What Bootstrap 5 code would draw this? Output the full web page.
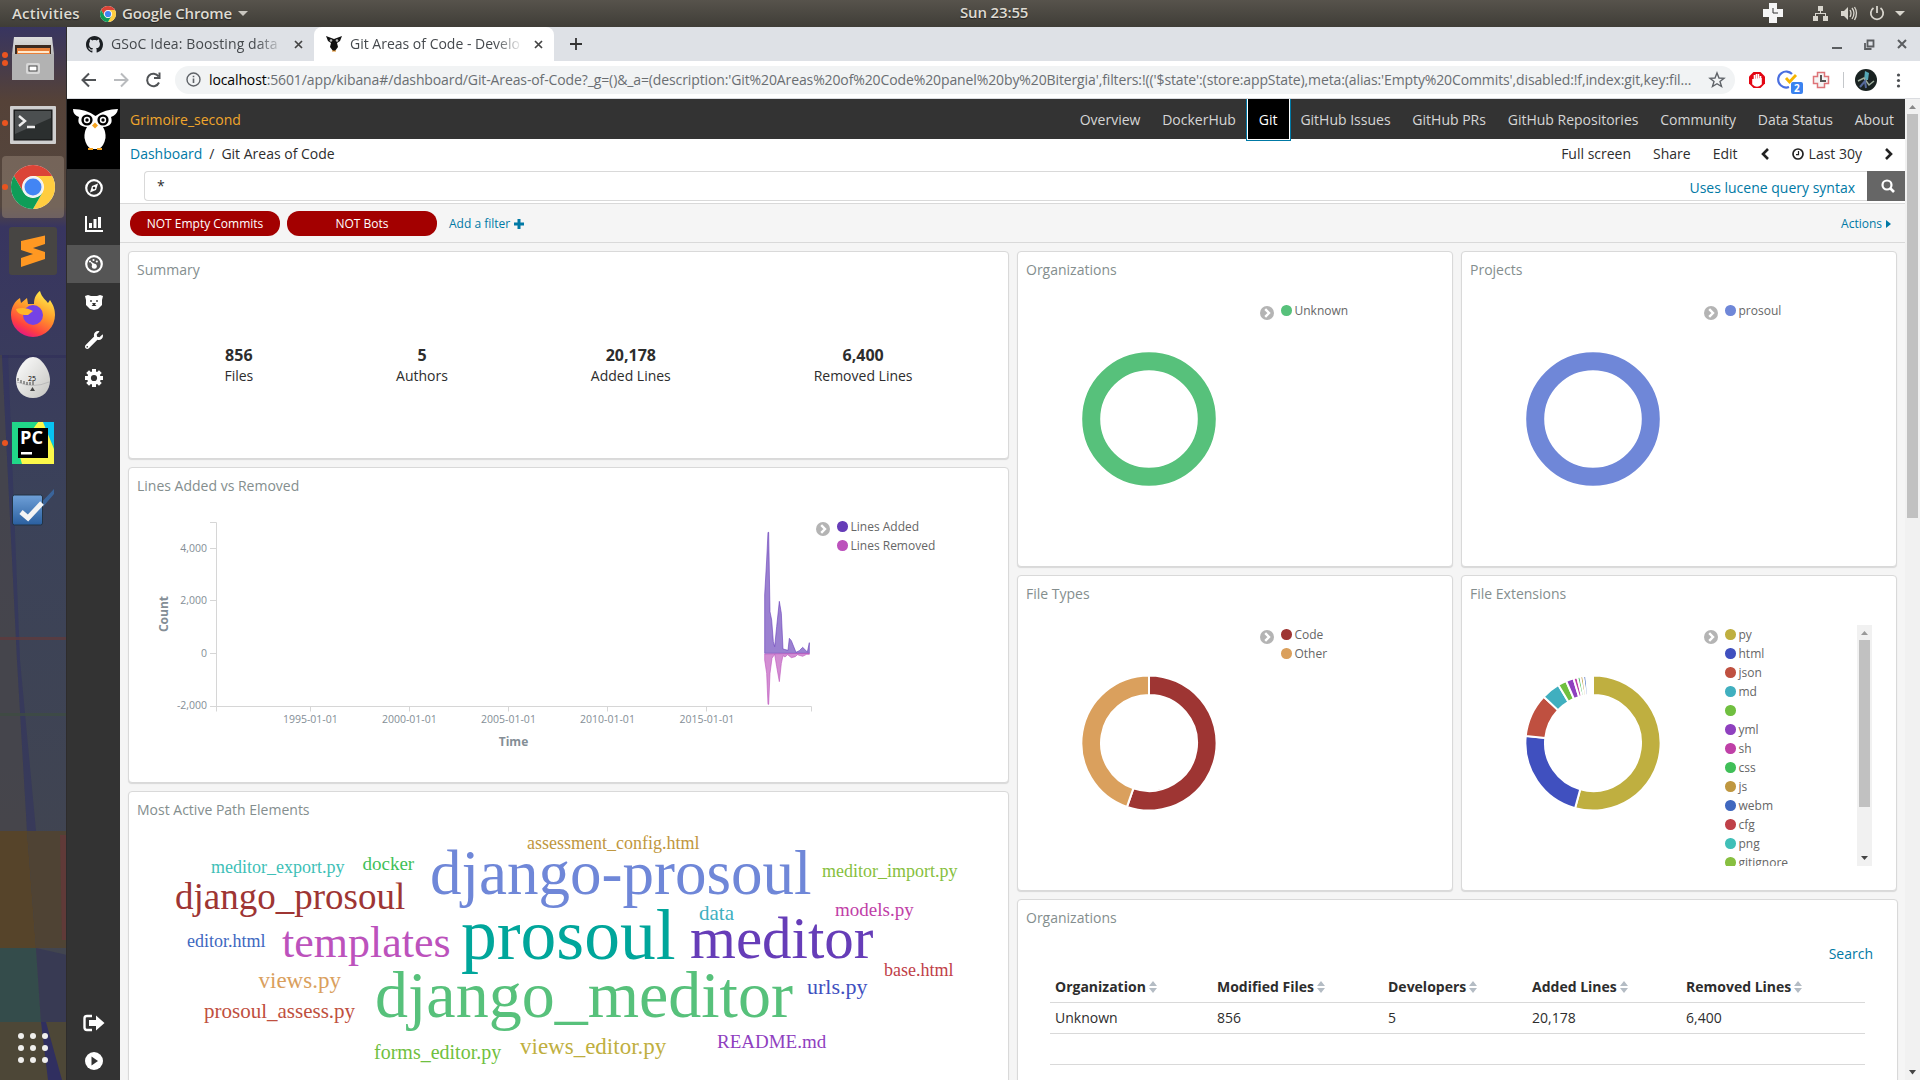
<!DOCTYPE html>
<html lang="en">
<head>
<meta charset="utf-8">
<title>Git Areas of Code</title>
<link href="https://cdn.jsdelivr.net/npm/bootstrap@5.3.0/dist/css/bootstrap.min.css" rel="stylesheet">
<script src="https://cdn.jsdelivr.net/npm/bootstrap@5.3.0/dist/js/bootstrap.bundle.min.js"></script>
<style>
body{font-family:"Open Sans","Noto Sans",sans-serif;font-size:14px;line-height:1.4;color:#2d2d2d;width:1920px;height:1080px;overflow:hidden;background:#f5f5f5}
a{color:#0079a5;text-decoration:none}
svg{display:block;flex:none}
svg text{font-family:"Open Sans","Noto Sans",sans-serif}
.topbar{height:27px;background:linear-gradient(#57534c,#3f3d37);color:#dfdbd2;font-weight:600;font-size:15px;text-shadow:0 1px 1px #222}
.topbar .clock-text{left:960px;top:2px;letter-spacing:-.15px}
.topbar .act{width:69px;letter-spacing:.2px}
.topbar .app{letter-spacing:-.15px}
.dock{width:67px;height:1053px;flex:none;border-right:1px solid #2e2c2c}
.dock .wall{left:0;top:0}
.browser{width:1853px;flex:none}
.tabstrip{height:34px;background:#dee1e6;color:#45494d}
.btab{height:34px;width:240px;padding:0 11px 0 12px}
.btab.now{background:#fff;border-radius:8px 8px 0 0}
.btab .ttl{width:173px;overflow:hidden;white-space:nowrap;-webkit-mask-image:linear-gradient(90deg,#000 84%,transparent)}
.toolbar{height:38px;background:#fff;border-bottom:1px solid #dadce0}
.omni{width:1560px;height:28px;border-radius:14px;background:#f1f3f4;color:#6a6e72}
.omni .url{width:1486px;white-space:nowrap;letter-spacing:-.115px}
.side{width:53px;background:#333;flex:none}
.side .owl{height:70px;background:#000}
.side .it{height:38px;display:flex;align-items:center;justify-content:center}
.side .on{background:#555}
.knav{height:40px;background:#333}
.knav .tenant{color:#f0a62c;padding-top:1px}
.knav a{color:#d6d6d6;padding:0 10.9px;height:40px;line-height:41px}
.knav a.on{background:#000;color:#fff;box-shadow:0 0 0 1px #fff,0 0 0 2px #0079a5;padding:0 11px;height:40px;margin:0 1px}
.crumbs{height:32px;background:#fff;padding-bottom:2px}
.qrow{height:33px;background:#fff;padding-left:24px;border-bottom:1px solid #d9d9d9}
.qbox{height:30px;border:1px solid #d9d9d9;border-right:0;border-radius:4px 0 0 4px}
.qbtn{width:38px;height:30px;background:#666}
.fbar{height:39px;border-bottom:1px solid #d9d9d9;font-size:12px}
.fbar a{padding-top:2px}
.pill-not{width:150px;height:25px;border-radius:12px;background:#a30000;color:#fff;line-height:25px;text-align:center}
.vscroll{width:15px;background:#f1f1f1;flex:none}
.vscroll .thumb{width:11px;background:#c1c1c1}
.panel{background:#fff;border:1px solid #d9d9d9;border-radius:4px;box-shadow:0 1px 1px rgba(0,0,0,.12);overflow:hidden;flex:none}
.panel h2{font-size:14px;font-weight:400;color:#848e8e;height:38px;line-height:36px;margin:0;padding-left:8px}
.w-left{width:881px}.w-half{width:436px}
.h-sum{height:208px}.h-std{height:316px}.h-tab{height:300px}
.tgl{margin-top:16px}
.lgd{margin:11px 0 0 7px;padding:0;list-style:none;font-size:12px;color:#666}
.lgd li{height:19px;line-height:18px;display:flex;align-items:center;gap:3px}
.lgd i{width:10.500px;height:10.500px;border-radius:50%;background:var(--c)}
.lgd.clip{height:241px;overflow:hidden;margin-top:11px;width:132px}
.metric b{font-size:16px;display:block;line-height:21px}
.metric{text-align:center;line-height:20px}
.tbl{width:815px;margin:7px 0 0 32px}
.tbl .tr{height:31px;border-bottom:1px solid #d9d9d9;display:grid;grid-template-columns:162px 171px 144px 154px 184px;padding-left:5px;align-items:center}
.tbl .th-row{font-weight:700;height:32px;padding-top:2px}
.tbl .th-row span{display:flex;align-items:center;gap:3px}
.cloud text{font-family:"Liberation Serif",serif}
.axis text{font-size:10.500px;fill:#848e96}
.axis .axttl{font-size:12px;font-weight:700}
</style>
</head>
<body>
<svg width="0" height="0" class="position-absolute">
<defs>
<g id="chrome"><circle r="22" fill="#fff"/><path d="M-19.05-11A22 22 0 0 1 19.05-11L0-11A11 11 0 0 0-9.5 5.5Z" fill="#db4437"/><path d="M19.05-11A22 22 0 0 1 0 22L9.5 5.5A11 11 0 0 0 0-11Z" fill="#ffcd40"/><path d="M0 22A22 22 0 0 1-19.05-11L-9.5 5.5A11 11 0 0 0 9.5 5.5Z" fill="#0f9d58"/><circle r="10.5" fill="#f1f1f1"/><circle r="8.5" fill="#4285f4"/></g>
<g id="tg"><circle cx="7" cy="7" r="7" fill="#b4b4b4"/><path d="M5.2 3.2 9 7 5.2 10.8" fill="none" stroke="#fff" stroke-width="2.4"/></g>
<g id="sort"><path d="M0 5 4 0 8 5ZM0 7 8 7 4 12Z" fill="#b4bcc4"/></g>
<linearGradient id="wg" x2="0" y2="1"><stop offset="0" stop-color="#383560"/><stop offset=".07" stop-color="#554238"/><stop offset=".17" stop-color="#54473f"/><stop offset=".19" stop-color="#383560"/><stop offset=".45" stop-color="#3b4259"/><stop offset="1" stop-color="#44464c"/></linearGradient>
<linearGradient id="gr" x2="0" y2="1"><stop offset="0" stop-color="#ddd"/><stop offset="1" stop-color="#8d8d8d"/></linearGradient>
<linearGradient id="fx" x1=".8" x2=".3" y2="1"><stop offset="0" stop-color="#fff44f"/><stop offset=".45" stop-color="#ff9a2a"/><stop offset=".8" stop-color="#ff4040"/><stop offset="1" stop-color="#e31587"/></linearGradient>
<linearGradient id="bl" x2="0" y2="1"><stop offset="0" stop-color="#6fa0d8"/><stop offset="1" stop-color="#2a5f9f"/></linearGradient>
<linearGradient id="egg" x2="1" y2="1"><stop offset="0" stop-color="#fff"/><stop offset="1" stop-color="#c4c4c0"/></linearGradient>
</defs>
</svg>

<header class="topbar d-flex align-items-center position-relative">
  <span class="act" style="margin-left:12px">Activities</span>
  <svg width="16" height="16" viewBox="-22 -22 44 44" style="margin-left:19px"><use href="#chrome"/></svg>
  <span class="app" style="margin-left:6px">Google Chrome</span>
  <svg width="10" height="6" style="margin-left:6px"><path d="M0 0H10L5 5Z" fill="#c9c6bf"/></svg>
  <span class="clock-text position-absolute">Sun 23:55</span>
  <svg class="ms-auto" width="157" height="27" viewBox="1763 0 157 27" fill="#d8d5cd"><path d="M1769 3h8v6h6v8h-6v6h-8v-6h-6v-8h6z" fill="#f5f5f5"/><path d="M1773 8v5h5" fill="none" stroke="#333"/><path d="M1818 6h5v5h-5zM1813 16h5v5h-5zM1823 16h5v5h-5zM1820 11h1v2h5v3h-1v-2h-9v2h-1v-3h5z"/><path d="M1841 11h3l4-4v13l-4-4h-3z"/><path d="M1850 10q2 3 0 7M1852 8q4 5 0 11M1854.500 7q4 6 0 13" fill="none" stroke="#d8d5cd" stroke-width="1.300"/><path d="M1873.500 8a6.200 6.200 0 1 0 7 0M1877 6v7" fill="none" stroke="#d8d5cd" stroke-width="1.800"/><path d="M1895 11h10l-5 5z"/></svg>
</header>

<div class="d-flex">
<aside class="dock position-relative overflow-hidden">
  <svg class="wall position-absolute" width="67" height="1053" viewBox="0 27 67 1053"><rect y="27" width="67" height="1053" fill="url(#wg)"/><path d="M0 355H66V358H0Z" fill="#302e58" opacity=".6"/><path d="M2 355 17 660 27 831H0V355Z" fill="#48454a" opacity=".75"/><path d="M2 355 17 660 27 831H36L20 660 8 355Z" fill="#302f62" opacity=".5"/><path d="M0 637H67V640H0Z" fill="#63393a" opacity=".7"/><path d="M0 713H67V716H0Z" fill="#3d4d40" opacity=".7"/><path d="M0 831H27L36 948H0Z" fill="#56442a"/><path d="M27 831H67V948H36Z" fill="#4f4334"/><path d="M60 835H67V940H62Z" fill="#603a38"/><path d="M0 948H36L41 1022H0Z" fill="#344c4b"/><path d="M36 948 67 955V1022H41Z" fill="#383a53"/><path d="M0 1022H67V1080H0Z" fill="#4d4737"/><path d="M41 1022H46L62 1080H48Z" fill="#302f60"/></svg>
  <div class="position-relative d-flex flex-column">
  <svg width="67" height="64" viewBox="0 27 67 64"><circle cx="5" cy="55" r="3" fill="#e95420"/><circle cx="5" cy="63" r="3" fill="#e95420"/><path d="M14 37H52L54 54V80H12V54Z" fill="url(#gr)"/><path d="M15 45H51V56H15Z" fill="#3b2a20"/><path d="M17 48H50V54H17Z" fill="#e8803a"/><path d="M18 51H49V53H18Z" fill="#ffe8cc"/><path d="M12 54H54V80H12Z" fill="#b2b2b2"/><rect x="26" y="63" width="14" height="11" rx="2" fill="#d8d8d8"/><rect x="29" y="66" width="8" height="5" fill="#fff" stroke="#444"/></svg>
  <svg width="67" height="64" viewBox="0 91 67 64"><circle cx="5" cy="123" r="3" fill="#e95420"/><rect x="10" y="106" width="46" height="38" rx="1" fill="#cfcfcf"/><rect x="14" y="110" width="38" height="30" fill="#2b2f2f" stroke="#111"/><path d="M15 111H51V118L15 134Z" fill="#4b4f50"/><path d="M19 116 25 121 19 126M27 127H35" fill="none" stroke="#eee" stroke-width="2.400"/></svg>
  <svg width="67" height="64" viewBox="0 155 67 64"><rect x="2" y="156" width="62" height="62" rx="4" fill="#8b7a6c" opacity=".6"/><circle cx="5" cy="187" r="3" fill="#e95420"/><use href="#chrome" transform="translate(33 187)"/></svg>
  <svg width="67" height="64" viewBox="0 219 67 64"><rect x="9" y="227" width="48" height="48" rx="3" fill="#474543"/><path d="M21 241 45 235.500V244L33 248 45 252V259L21 267V258L33 254 21 250Z" fill="#ff9822"/></svg>
  <svg width="67" height="64" viewBox="0 283 67 64"><path d="M11 315C11 307 15 301 20 298L21 303 27 298 28 304 34 304C34 297 37 293 40 291 42 298 46 300 48 303L50 300C54 306 55 310 55 315A22 22 0 0 1 11 315Z" fill="url(#fx)"/><circle cx="33" cy="315" r="10" fill="#7542e5"/><path d="M16 309Q25 306 33 311L28 315H24Q17 314 16 309Z" fill="#ffb62a"/></svg>
  <svg width="67" height="64" viewBox="0 347 67 64"><path d="M33 357C42 357 50 371 50 380 50 391 43 398 33 398S16 391 16 380C16 371 24 357 33 357Z" fill="url(#egg)"/><path d="M17 382Q33 389 49 382" fill="none" stroke="#bbb"/><path d="M18 381V378M21 383V380M24 384V381M27 385V382M30 385V382M33 385V381" stroke="#444"/><text x="28" y="381" font-size="7">25</text><path d="M30 391 32.500 387 35 391Z" fill="#444"/></svg>
  <svg width="67" height="64" viewBox="0 411 67 64"><circle cx="5" cy="443" r="3" fill="#e95420"/><rect x="12" y="422" width="42" height="42" fill="#21d789"/><path d="M42 422H54V446L48 437Z" fill="#07c3f2"/><path d="M38 422H43L54 449V464H22L18 450Z" fill="#fcf84a"/><path d="M12 450 38 422H12Z" fill="#21d789"/><rect x="18" y="428" width="30" height="30"/><text x="20" y="444" font-size="17" font-weight="700" fill="#fff" textLength="23" lengthAdjust="spacingAndGlyphs">PC</text><path d="M21 452H32V454.500H21Z" fill="#fff"/></svg>
  <svg width="67" height="64" viewBox="0 475 67 64"><path d="M38 506 54 489V494L42 508Z" fill="#3b74b7" opacity=".7"/><rect x="12.500" y="495" width="30" height="30" rx="2" fill="url(#bl)" stroke="#234"/><path d="M21 512 28 518 42 503" fill="none" stroke="#f4f4f4" stroke-width="5"/></svg>
  <svg width="67" height="34" viewBox="0 1030 67 34" style="margin-top:491px"><g fill="#f0efed"><circle cx="21" cy="1036" r="3"/><circle cx="33" cy="1036" r="3"/><circle cx="45" cy="1036" r="3"/><circle cx="21" cy="1048" r="3"/><circle cx="33" cy="1048" r="3"/><circle cx="45" cy="1048" r="3"/><circle cx="21" cy="1060" r="3"/><circle cx="33" cy="1060" r="3"/><circle cx="45" cy="1060" r="3"/></g></svg>
  </div>
</aside>

<div class="browser d-flex flex-column">
  <div class="tabstrip d-flex align-items-center">
    <div class="btab d-flex align-items-center" style="margin-left:7px">
      <svg width="17" height="17" viewBox="0 0 16 16" class="me-2"><path fill="#1b1f23" d="M8 0C3.580 0 0 3.580 0 8c0 3.540 2.290 6.530 5.470 7.590.4.070.55-.17.55-.38 0-.19-.01-.82-.01-1.490-2.010.37-2.530-.49-2.690-.94-.09-.23-.48-.94-.82-1.130-.28-.15-.68-.52-.01-.53.63-.01 1.080.58 1.230.82.72 1.210 1.870.87 2.330.66.07-.52.28-.87.51-1.070-1.780-.2-3.640-.89-3.640-3.950 0-.87.31-1.590.82-2.150-.08-.2-.36-1.020.08-2.120 0 0 .67-.21 2.200.82.64-.18 1.320-.27 2-.27s1.360.09 2 .27c1.530-1.040 2.200-.82 2.200-.82.44 1.100.16 1.920.08 2.120.51.56.82 1.270.82 2.150 0 3.070-1.870 3.750-3.650 3.950.29.25.54.73.54 1.480 0 1.070-.01 1.930-.01 2.200 0 .21.15.46.55.38A8.010 8.010 0 0 0 16 8c0-4.420-3.580-8-8-8z"/></svg>
      <span class="ttl" style="letter-spacing:.1px">GSoC Idea: Boosting data</span>
      <svg class="ms-auto" width="9" height="9" viewBox="0 0 9 9"><path d="M1 1 8 8M8 1 1 8" stroke="#444" stroke-width="1.700"/></svg>
    </div>
    <div class="btab now d-flex align-items-center">
      <svg width="16" height="16" viewBox="0 0 16 16" class="me-2"><path d="M0 0 8 3 16 0 14 5 11 7 12 11 9 15H7L4 11 5 7 2 5Z" fill="#111"/><circle cx="5" cy="4.500" r="1.300" fill="#bbb"/><circle cx="11" cy="4.500" r="1.300" fill="#bbb"/><path d="M6 15H10" stroke="#e08b20"/></svg>
      <span class="ttl">Git Areas of Code - Develo</span>
      <svg class="ms-auto" width="9" height="9" viewBox="0 0 9 9"><path d="M1 1 8 8M8 1 1 8" stroke="#444" stroke-width="1.700"/></svg>
    </div>
    <svg width="12" height="12" viewBox="0 0 12 12" style="margin-left:16px"><path d="M6 0V12M0 6H12" stroke="#333" stroke-width="1.800"/></svg>
    <svg class="ms-auto" width="88" height="34" viewBox="1832 27 88 34" fill="none" stroke="#5a5d60" stroke-width="2"><path d="M1832 48H1842"/><path d="M1867.500 40.500H1873.500V46.500H1867.500ZM1865 43V49H1871.500" stroke-width="1.800"/><path d="M1898 40 1906 48M1906 40 1898 48"/></svg>
  </div>
  <div class="toolbar d-flex align-items-center">
    <svg width="108" height="36" viewBox="67 61 108 36" fill="none" stroke="#505356" stroke-width="2"><path d="M96 79H83M89 72.500 82.500 79 89 85.500"/><path d="M114 79H127M121 72.500 127.500 79 121 85.500" stroke="#b9bbbe"/><path d="M158.500 75.500A6.200 6.200 0 1 0 159 81.500M159.500 71.500V77H154"/></svg>
    <div class="omni d-flex align-items-center">
      <svg width="15" height="15" viewBox="0 0 15 15" style="margin:0 8px 0 11px"><circle cx="7.500" cy="7.500" r="6.500" fill="none" stroke="#5f6368" stroke-width="1.400"/><path d="M7.500 6.500V11M7.500 3.800V5.300" stroke="#5f6368" stroke-width="1.600"/></svg>
      <span class="url"><span class="text-black">localhost</span>:5601/app/kibana#/dashboard/Git-Areas-of-Code?_g=()&amp;_a=(description:'Git%20Areas%20of%20Code%20panel%20by%20Bitergia',filters:!(('$state':(store:appState),meta:(alias:'Empty%20Commits',disabled:!f,index:git,key:fil…</span>
      <svg class="ms-auto" width="18" height="18" viewBox="0 0 18 18" style="margin-right:9px"><path d="M9 2 11 7 16 7.300 12 10.500 13.500 15.500 9 12.700 4.500 15.500 6 10.500 2 7.300 7 7Z" fill="none" stroke="#5f6368" stroke-width="1.400"/></svg>
    </div>
    <svg class="ms-auto" width="180" height="36" viewBox="1740 61 180 36"><path d="M1753.500 71H1760.500L1765 75.500V82.500L1760.500 87H1753.500L1749 82.500V75.500Z" fill="#e30613"/><path d="M1753 78V83Q1757 87 1761 83V77M1754.500 80V74M1756.500 79V73M1758.500 79V73M1760.500 80V75" stroke="#fff" stroke-width="1.600" fill="#fff"/><path d="M1792 73A8 8 0 1 0 1789 86" fill="none" stroke="#4a6fe0" stroke-width="2.200"/><path d="M1786 77 1789.500 81 1796 74" fill="none" stroke="#f5b400" stroke-width="2.800"/><rect x="1791" y="81" width="12" height="12" rx="2" fill="#3b82f0"/><text x="1794" y="91" font-size="10" font-weight="700" fill="#fff">2</text><path d="M1817.500 71.500H1824.500V75.500H1828.500V82.500H1824.500V86.500H1817.500V82.500H1813.500V75.500H1817.500Z" fill="#f5f5f5" stroke="#de7478" stroke-width="1.500"/><path d="M1821 74V80H1826" fill="none" stroke="#555" stroke-width="2"/><path d="M1843.500 71V87" stroke="#c4c7ca"/><circle cx="1866" cy="79" r="11" fill="#1a2322"/><path d="M1865 70 1869 72 1868 79 1864 79Z" fill="#55a9b8"/><path d="M1858 80 1864 77 1869 84 1874 80" stroke="#9fb0a0" fill="none" stroke-width="1.500"/><path d="M1860 86 1865 80 1866 87" stroke="#54699b" fill="none" stroke-width="2"/><g fill="#4c4f52"><circle cx="1898.500" cy="74" r="1.600"/><circle cx="1898.500" cy="79.500" r="1.600"/><circle cx="1898.500" cy="85" r="1.600"/></g></svg>
  </div>

  <div class="d-flex" style="height:981px">
    <nav class="side d-flex flex-column">
      <div class="owl"><svg width="53" height="70" viewBox="67 99 53 70"><path d="M73 109Q86 109 95.500 116 105 109 118 109 117 115 111 117 114 126 103 127 106 132 105.500 138 104 146 99 149H91Q86 146 84.500 138 84 132 87 127 76 126 79 117 73 115 73 109Z" fill="#fff"/><circle cx="87" cy="120" r="5.600" fill="#000"/><circle cx="103" cy="120" r="5.600" fill="#000"/><circle cx="87" cy="120" r="3.200" fill="#fff"/><circle cx="103" cy="120" r="3.200" fill="#fff"/><circle cx="87" cy="120" r="1.700" fill="#000"/><circle cx="103" cy="120" r="1.700" fill="#000"/><path d="M95 122.500 98 125.500 95 128.500 92 125.500Z" fill="#f5a31f"/><path d="M88 149H93M97 149H102" stroke="#f5a31f" stroke-width="2"/></svg></div>
      <a href="#" class="it"><svg width="18" height="18" viewBox="0 0 18 18"><circle cx="9" cy="9" r="7.800" fill="none" stroke="#fff" stroke-width="2.200"/><path d="M13 4.500 11 11 5 13.500 7 7Z" fill="#fff"/><circle cx="9" cy="9" r="1.300" fill="#333"/></svg></a>
      <a href="#" class="it pb-1"><svg width="18" height="16" viewBox="0 0 18 16"><path d="M1 0V15H18" fill="none" stroke="#fff" stroke-width="2"/><path d="M4 7H7V12H4ZM8.500 3H11.500V12H8.500ZM13 1H16V12H13Z" fill="#fff"/></svg></a>
      <a href="#" class="it on"><svg width="18" height="18" viewBox="0 0 18 18"><circle cx="9" cy="9" r="7.800" fill="none" stroke="#fff" stroke-width="2.200"/><path d="M5 6 10.500 9.500 9 13Z" fill="#fff"/><circle cx="9.300" cy="11.200" r="2.500" fill="#fff"/><circle cx="8.500" cy="5" r="1.100" fill="#fff"/><circle cx="11.800" cy="6.500" r="1.100" fill="#fff"/><circle cx="5" cy="6.500" r="1.100" fill="#fff"/></svg></a>
      <a href="#" class="it"><svg width="18" height="15" viewBox="0 0 18 15"><path d="M0 1 3 0 6 1H12L15 0 18 1 17 5V10L13 14 9 15 5 14 1 10V5Z" fill="#fff"/><circle cx="6" cy="6" r=".9" fill="#333"/><circle cx="12" cy="6" r=".9" fill="#333"/><path d="M7 8H11L10 9.500 11.500 11H6.500L8 9.500Z" fill="#333"/></svg></a>
      <a href="#" class="it"><svg width="18" height="18" viewBox="0 0 512 512"><path fill="#fff" d="M507 109c-2-9-14-12-20-5l-75 74-68-11-11-68 74-75c7-6 4-18-5-20-40-10-83 0-114 31-33 33-42 81-28 123L19 400c-25 25-25 68 0 93s68 25 93 0l241-241c43 14 91 5 124-29 31-31 41-74 30-114zM64 472a24 24 0 1 1 0-48 24 24 0 0 1 0 48z"/></svg></a>
      <a href="#" class="it"><svg width="18" height="18" viewBox="-9 -9 18 18"><g fill="#fff"><circle r="6.800"/><g id="teeth"><rect x="-2" y="-9" width="4" height="18"/><rect x="-9" y="-2" width="18" height="4"/></g><use href="#teeth" transform="rotate(45)"/></g><circle r="3.100" fill="#333"/></svg></a>
      <a href="#" class="it mt-auto"><svg width="22" height="18" viewBox="0 0 22 18"><path d="M9 2H4Q1.500 2 1.500 4.500V13.500Q1.500 16 4 16H9" fill="none" stroke="#fff" stroke-width="2.400"/><path d="M6 6H13V1.500L21.500 9 13 16.500V12H6Z" fill="#fff"/></svg></a>
      <a href="#" class="it"><svg width="18" height="18" viewBox="0 0 18 18"><circle cx="9" cy="9" r="9" fill="#fff"/><path d="M6.500 4.500 13 9 6.500 13.500Z" fill="#333"/></svg></a>
    </nav>

    <main class="flex-grow-1 overflow-hidden">
      <div class="knav d-flex align-items-center position-relative">
        <span class="tenant me-auto" style="margin-left:10px">Grimoire_second</span>
        <a href="#">Overview</a><a href="#">DockerHub</a><a href="#" class="on">Git</a><a href="#">GitHub Issues</a><a href="#">GitHub PRs</a><a href="#">GitHub Repositories</a><a href="#">Community</a><a href="#">Data Status</a><a href="#">About</a>
      </div>
      <div class="crumbs d-flex align-items-center">
        <a href="#" style="margin-left:10px">Dashboard</a><span style="margin:0 7px">/</span><span>Git Areas of Code</span>
        <span class="ms-auto">Full screen</span><span style="margin-left:22px">Share</span><span style="margin-left:22px">Edit</span>
        <svg width="8" height="12" viewBox="0 0 8 12" style="margin-left:23px"><path d="M7 1 2 6 7 11" fill="none" stroke="#222" stroke-width="2.600"/></svg>
        <svg width="12" height="12" viewBox="0 0 12 12" style="margin:0 5px 0 23px"><circle cx="6" cy="6" r="5" fill="none" stroke="#222" stroke-width="1.700"/><path d="M6.500 3V6.700H4" fill="none" stroke="#222" stroke-width="1.200"/></svg>
        <span>Last 30y</span>
        <svg width="8" height="12" viewBox="0 0 8 12" style="margin:0 12px 0 23px"><path d="M1 1 6 6 1 11" fill="none" stroke="#222" stroke-width="2.600"/></svg>
      </div>
      <div class="qrow d-flex">
        <div class="qbox flex-grow-1 d-flex align-items-center justify-content-between"><span style="margin-left:12px">*</span><a href="#" class="pt-1" style="margin-right:12px">Uses lucene query syntax</a></div>
        <div class="qbtn d-flex align-items-center justify-content-center"><svg width="14" height="14" viewBox="0 0 14 14" class="ms-1"><circle cx="6" cy="6" r="4.500" fill="none" stroke="#fff" stroke-width="2.200"/><path d="M9.500 9.500 13 13" stroke="#fff" stroke-width="2.600"/></svg></div>
      </div>
      <div class="fbar d-flex align-items-center">
        <span class="pill-not" style="margin-left:10px">NOT Empty Commits</span><span class="pill-not" style="margin-left:7px">NOT Bots</span>
        <a href="#" class="d-flex align-items-center" style="margin-left:12px">Add a filter<svg width="10" height="10" viewBox="0 0 10 10" style="margin-left:4px"><path d="M5 0V10M0 5H10" stroke="#0079a5" stroke-width="3"/></svg></a>
        <a href="#" class="ms-auto d-flex align-items-center">Actions<svg width="5" height="8" style="margin:0 14px 0 4px"><path d="M0 0 5 4 0 8Z" fill="#0079a5"/></svg></a>
      </div>

      <div class="d-flex p-2 gap-2">
        <div class="d-flex flex-column gap-2 w-left flex-shrink-0">
          <section class="panel h-sum"><h2>Summary</h2>
            <div class="d-flex justify-content-around" style="padding:55px 24px 0">
              <div class="metric"><b>856</b>Files</div><div class="metric"><b>5</b>Authors</div><div class="metric"><b>20,178</b>Added Lines</div><div class="metric"><b>6,400</b>Removed Lines</div>
            </div>
          </section>
          <section class="panel h-std"><h2>Lines Added vs Removed</h2>
            <div class="d-flex">
              <svg class="axis" width="687" height="275" viewBox="129 506 687 275">
                <path d="M210 522.500H216.500V711.500M210 548.500H216M210 600.500H216M210 653.500H216M210 706.500H811.500V711.500M310.500 706V711.500M409.500 706V711.500M508.500 706V711.500M607.500 706V711.500M706.500 706V711.500" fill="none" stroke="#d6d6d6"/>
                <g text-anchor="end"><text x="207" y="551.500">4,000</text><text x="207" y="603.500">2,000</text><text x="207" y="656.800">0</text><text x="207" y="708.800">-2,000</text></g>
                <g text-anchor="middle"><text x="310.300" y="722.800">1995-01-01</text><text x="409.300" y="722.800">2000-01-01</text><text x="508.500" y="722.800">2005-01-01</text><text x="607.500" y="722.800">2010-01-01</text><text x="706.800" y="722.800">2015-01-01</text>
                <text class="axttl" x="513.500" y="745.700">Time</text><text class="axttl" transform="translate(168 614) rotate(-90)">Count</text></g>
                <g transform="translate(560 460) scale(.33333)" stroke-width="3">
                  <path d="M614 580V405L620 300 624 217 626 217 630 455 635 480 640 545 644 560 650 500 658 424 664 460 669 567 684 571 688 535 694 542 708 577 718 572 728 562 742 576 748 548V580Z" fill="#663db8" fill-opacity=".65" stroke="#663db8" stroke-opacity=".6"/>
                  <path d="M614 582V600L620 640 624 733 626 733 630 640 636 595 644 583 650 620 658 665 664 610 669 587 675 591 683 584 694 593 706 590 712 584 728 589 740 583H748V580Z" fill="#bc52bc" fill-opacity=".65" stroke="#bc52bc" stroke-opacity=".6"/>
                </g>
              </svg>
              <svg class="tgl" width="14" height="14"><use href="#tg"/></svg>
              <ul class="lgd"><li><i style="--c:#663db8"></i>Lines Added</li><li><i style="--c:#bc52bc"></i>Lines Removed</li></ul>
            </div>
          </section>
          <section class="panel h-tab"><h2>Most Active Path Elements</h2>
            <svg class="cloud" width="878" height="260" viewBox="129 830 878 260">
              <text x="430" y="894" font-size="63" fill="#6f87d8">django-prosoul</text>
              <text x="461" y="959" font-size="71.500" fill="#00a69b">prosoul</text>
              <text x="375" y="1017" font-size="66" fill="#57c17b">django_meditor</text>
              <text x="690" y="958" font-size="59" fill="#663db8">meditor</text>
              <text x="282" y="957" font-size="44" fill="#bc52bc">templates</text>
              <text x="175" y="909" font-size="37" fill="#9e3533">django_prosoul</text>
              <text x="258.500" y="988" font-size="23" fill="#daa05d">views.py</text>
              <text x="520" y="1054" font-size="23" fill="#bfaf40">views_editor.py</text>
              <text x="374" y="1059" font-size="20" fill="#70bf40">forms_editor.py</text>
              <text x="204" y="1018" font-size="21" fill="#bf5040">prosoul_assess.py</text>
              <text x="807" y="993.500" font-size="22" fill="#4050bf">urls.py</text>
              <text x="717" y="1048" font-size="19" fill="#8f40bf">README.md</text>
              <text x="699" y="920" font-size="21" fill="#40afbf">data</text>
              <text x="835" y="916" font-size="19" fill="#bf40a7">models.py</text>
              <text x="884" y="976" font-size="18" fill="#bf4048">base.html</text>
              <text x="822" y="877" font-size="18" fill="#87bf40">meditor_import.py</text>
              <text x="527" y="849" font-size="18" fill="#bf9740">assessment_config.html</text>
              <text x="362.500" y="870" font-size="19" fill="#40bf58">docker</text>
              <text x="211" y="873" font-size="18" fill="#40bfb7">meditor_export.py</text>
              <text x="187" y="947" font-size="18" fill="#4068bf">editor.html</text>
            </svg>
          </section>
        </div>

        <div class="d-flex flex-column gap-2 w-left flex-shrink-0">
          <div class="d-flex gap-2">
            <section class="panel h-std w-half"><h2>Organizations</h2><div class="d-flex">
              <svg width="242" height="270" viewBox="-131 -129 242 270"><circle r="57.800" fill="none" stroke="#57c17b" stroke-width="18"/></svg>
              <svg class="tgl" width="14" height="14"><use href="#tg"/></svg>
              <ul class="lgd"><li><i style="--c:#57c17b"></i>Unknown</li></ul></div></section>
            <section class="panel h-std w-half"><h2>Projects</h2><div class="d-flex">
              <svg width="242" height="270" viewBox="-131 -129 242 270"><circle r="57.800" fill="none" stroke="#6f87d8" stroke-width="18"/></svg>
              <svg class="tgl" width="14" height="14"><use href="#tg"/></svg>
              <ul class="lgd"><li><i style="--c:#6f87d8"></i>prosoul</li></ul></div></section>
          </div>
          <div class="d-flex gap-2">
            <section class="panel h-std w-half"><h2>File Types</h2><div class="d-flex">
              <svg width="242" height="270" viewBox="-131 -129 242 270" class="donut" data-slices="199 #9e3533,360 #daa05d"></svg>
              <svg class="tgl" width="14" height="14"><use href="#tg"/></svg>
              <ul class="lgd"><li><i style="--c:#9e3533"></i>Code</li><li><i style="--c:#daa05d"></i>Other</li></ul></div></section>
            <section class="panel h-std w-half"><h2>File Extensions</h2><div class="d-flex">
              <svg width="242" height="270" viewBox="-131 -129 242 270" class="donut" data-slices="195.400 #bfaf40,276 #4050bf,313.200 #bf5040,329.200 #40afbf,336.600 #70bf40,343.200 #8f40bf,346.600 #bf40a7,349.200 #40bf58,351.700 #bf9740,354.200 #4068bf,355.400 #fff,360 #fff"></svg>
              <svg class="tgl" width="14" height="14"><use href="#tg"/></svg>
              <ul class="lgd clip"><li><i style="--c:#bfaf40"></i>py</li><li><i style="--c:#4050bf"></i>html</li><li><i style="--c:#bf5040"></i>json</li><li><i style="--c:#40afbf"></i>md</li><li><i style="--c:#70bf40"></i></li><li><i style="--c:#8f40bf"></i>yml</li><li><i style="--c:#bf40a7"></i>sh</li><li><i style="--c:#40bf58"></i>css</li><li><i style="--c:#bf9740"></i>js</li><li><i style="--c:#4068bf"></i>webm</li><li><i style="--c:#bf4048"></i>cfg</li><li><i style="--c:#40bfb7"></i>png</li><li><i style="--c:#87bf40"></i>gitignore</li></ul>
              <svg width="15" height="241" style="margin-top:11px"><path d="M0 0H15V241H0Z" fill="#f1f1f1"/><path d="M2 15H13V182H2Z" fill="#c1c1c1"/><path d="M4 10 7.500 6 11 10Z" fill="#999"/><path d="M4 231H11L7.500 235Z" fill="#444"/></svg>
              </div></section>
          </div>
          <section class="panel h-tab"><h2>Organizations</h2>
            <div class="text-end" style="padding:6px 24px 0 0"><a href="#">Search</a></div>
            <div class="tbl">
              <div class="tr th-row"><span>Organization<svg width="8" height="12"><use href="#sort"/></svg></span><span>Modified Files<svg width="8" height="12"><use href="#sort"/></svg></span><span>Developers<svg width="8" height="12"><use href="#sort"/></svg></span><span>Added Lines<svg width="8" height="12"><use href="#sort"/></svg></span><span>Removed Lines<svg width="8" height="12"><use href="#sort"/></svg></span></div>
              <div class="tr"><span>Unknown</span><span>856</span><span>5</span><span>20,178</span><span>6,400</span></div>
              <div class="tr"></div>
            </div>
          </section>
        </div>
      </div>
    </main>
    <div class="vscroll d-flex flex-column align-items-center">
      <svg width="15" height="15"><path d="M4 10 7.500 6 11 10Z" fill="#8a8a8a"/></svg>
      <div class="thumb" style="height:404px"></div>
      <svg class="mt-auto" width="15" height="15"><path d="M4 5H11L7.500 9.500Z" fill="#444"/></svg>
    </div>
  </div>
</div>
</div>
<script>
// Ring slices: each entry gives the end angle (degrees clockwise from the top) and its colour.
document.querySelectorAll('.donut').forEach(function (svg) {
  var R = 67.6, r = 48, a = 0, out = '';
  function pt(rad, deg) { var t = deg * Math.PI / 180; return (rad * Math.sin(t)).toFixed(2) + ' ' + (-rad * Math.cos(t)).toFixed(2); }
  svg.dataset.slices.split(',').forEach(function (s) {
    var p = s.split(' '), b = +p[0], big = b - a > 180 ? 1 : 0;
    out += '<path d="M' + pt(R, a) + 'A' + R + ' ' + R + ' 0 ' + big + ' 1 ' + pt(R, b) + 'L' + pt(r, b) + 'A' + r + ' ' + r + ' 0 ' + big + ' 0 ' + pt(r, a) + 'Z" fill="' + p[1] + '" stroke="#fff" stroke-width="2"/>';
    a = b;
  });
  svg.innerHTML = out;
});
</script>
</body>
</html>
